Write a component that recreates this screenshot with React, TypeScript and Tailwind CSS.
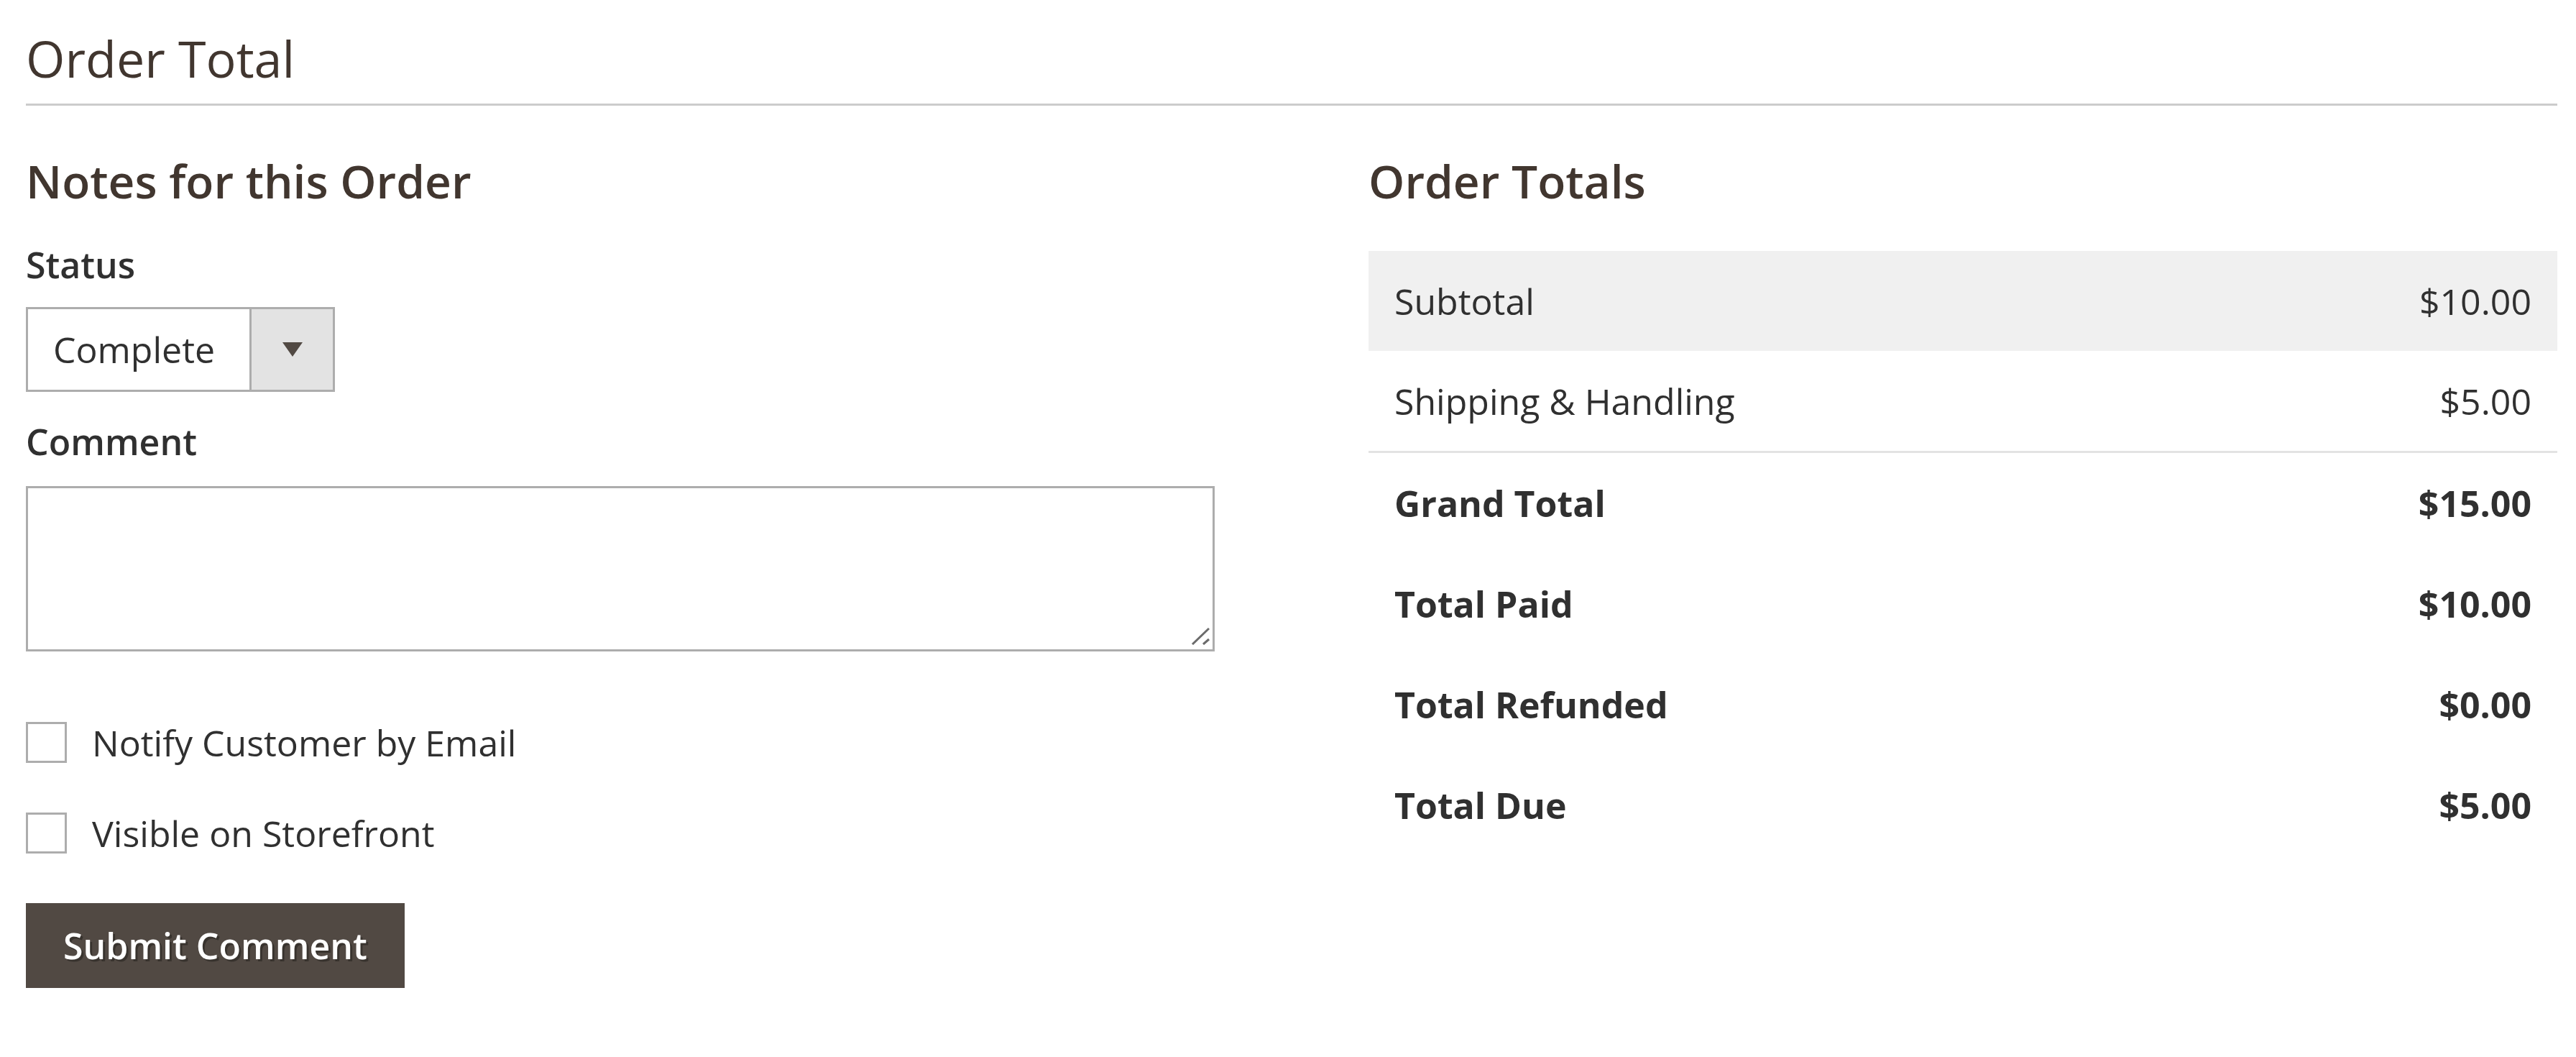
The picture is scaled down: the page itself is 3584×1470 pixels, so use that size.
import React from "react";

const totals = [
  { label: "Subtotal", value: "$10.00", shaded: true },
  { label: "Shipping & Handling", value: "$5.00", shaded: false },
];

const grandTotals = [
  { label: "Grand Total", value: "$15.00" },
  { label: "Total Paid", value: "$10.00" },
  { label: "Total Refunded", value: "$0.00" },
  { label: "Total Due", value: "$5.00" },
];

const CheckboxRow = ({ label, className }: { label: string; className: string }) => (
  <label className={`flex items-center gap-[35px] ${className}`}>
    <input
      type="checkbox"
      className="appearance-none w-[57px] h-[57px] border-[3px] border-[#adadad] bg-white shrink-0"
    />
    <span className="text-[50px] leading-none text-[#303030]">{label}</span>
  </label>
);

const App = () => {
  return (
    <div className="w-full h-[1470px] bg-white font-['Open_Sans',sans-serif] pl-[36px] pr-[26px] overflow-hidden">
      <div className="pt-[46px] pb-[28px] border-b-[3px] border-[#cccccc]">
        <h2 className="text-[70px] leading-none font-normal text-[#41362f]">
          Order Total
        </h2>
      </div>

      <div className="grid grid-cols-2 gap-x-[214px] mt-[73px]">
        {/* notes */}
        <div>
          <h3 className="text-[64px] leading-none font-semibold text-[#41362f]">
            Notes for this Order
          </h3>
          <div className="mt-[59px] text-[50px] leading-none font-semibold text-[#303030]">
            Status
          </div>
          <div className="mt-[34px] flex w-[430px] h-[118px] border-[3px] border-[#adadad] bg-white">
            <div className="flex-1 flex items-center pl-[35px] text-[50px] leading-none text-[#303030]">
              Complete
            </div>
            <div className="w-[116px] border-l-[3px] border-[#adadad] bg-[#e3e3e3] flex items-center justify-center">
              <svg width="28" height="20" viewBox="0 0 28 20">
                <polygon points="0,0 28,0 14,20" fill="#514943" />
              </svg>
            </div>
          </div>
          <div className="mt-[44px] text-[50px] leading-none font-semibold text-[#303030]">
            Comment
          </div>
          <div className="relative mt-[37px]">
            <textarea className="block w-full h-[230px] border-[3px] border-[#adadad] resize-none outline-none" />
            <svg
              className="absolute right-[7px] bottom-[9px]"
              width="26"
              height="26"
              viewBox="0 0 26 26"
            >
              <line x1="25" y1="3" x2="2" y2="25" stroke="#6b6b6b" strokeWidth="3" />
              <line x1="25" y1="18" x2="17" y2="25" stroke="#6b6b6b" strokeWidth="3" />
            </svg>
          </div>
          <CheckboxRow label="Notify Customer by Email" className="mt-[98px]" />
          <CheckboxRow label="Visible on Storefront" className="mt-[69px]" />
          <button className="mt-[69px] h-[118px] px-[52px] bg-[#514943] text-white text-[50px] leading-none font-semibold [text-shadow:3px_3px_0_rgba(0,0,0,0.3)]">
            Submit Comment
          </button>
        </div>

        {/* totals */}
        <div>
          <h3 className="text-[64px] leading-none font-semibold text-[#41362f]">
            Order Totals
          </h3>
          <div className="mt-[65px] text-[50px] leading-none text-[#303030]">
            {totals.map((row) => (
              <div
                key={row.label}
                className={`flex items-center justify-between h-[139px] px-[36px] ${
                  row.shaded ? "bg-[#f0f0f0]" : ""
                }`}
              >
                <span>{row.label}</span>
                <span>{row.value}</span>
              </div>
            ))}
            <div className="border-t-[3px] border-[#e3e3e3]">
              {grandTotals.map((row) => (
                <div
                  key={row.label}
                  className="flex items-center justify-between h-[140px] px-[36px] font-bold"
                >
                  <span>{row.label}</span>
                  <span>{row.value}</span>
                </div>
              ))}
            </div>
          </div>
        </div>
      </div>
    </div>
  );
};

export default App;
